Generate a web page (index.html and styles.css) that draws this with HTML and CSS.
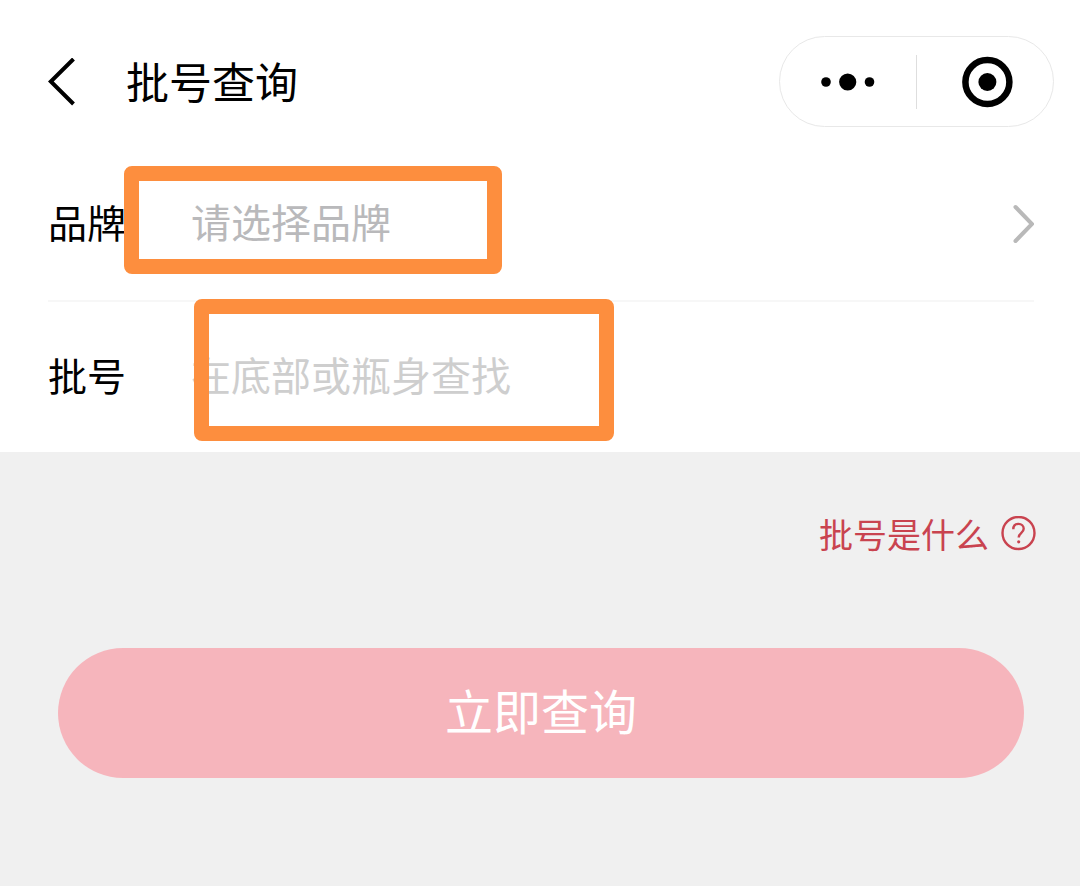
FILE: index.html
```html
<!DOCTYPE html>
<html lang="zh-CN">
<head>
  <meta charset="utf-8">
  <meta name="viewport" content="width=device-width, initial-scale=1">
  <title>批号查询</title>
  <link rel="stylesheet" href="styles.css">
</head>
<body>
  <header class="navbar">
    <button class="icon-button back" type="button" aria-label="返回">
      <svg width="28" height="48" viewBox="0 0 28 48" fill="none" stroke="#000" stroke-width="4"><path d="M25.500 1L2.800 23.500L25.500 46"/></svg>
    </button>
    <h1 class="title">批号查询</h1>
    <div class="capsule">
      <button class="icon-button capsule-part" type="button" aria-label="更多">
        <svg width="56" height="20" viewBox="0 0 56 20"><circle cx="6" cy="10" r="4.800"/><circle cx="27.700" cy="10" r="8.600"/><circle cx="49.500" cy="10" r="4.800"/></svg>
      </button>
      <button class="icon-button capsule-part" type="button" aria-label="关闭">
        <svg width="56" height="52" viewBox="-4 0 56 52"><circle cx="26.400" cy="26" r="22" fill="none" stroke="#000" stroke-width="6.500"/><circle cx="26.400" cy="26" r="9"/></svg>
      </button>
    </div>
  </header>
  <main>
    <form class="form">
      <div class="fields">
        <div class="row">
          <label class="label" for="brand">品牌</label>
          <button class="control picker" id="brand" type="button">
            <span class="picker-text">请选择品牌</span>
            <svg width="24" height="40" viewBox="0 0 24 40" fill="none" stroke="#b9b9b9" stroke-width="4" stroke-linecap="round"><path d="M5.500 3L22 20L5.500 37"/></svg>
          </button>
          <span class="highlight highlight-brand"></span>
        </div>
        <div class="row">
          <label class="label" for="batch">批号</label>
          <input class="control" id="batch" type="text" placeholder="在底部或瓶身查找">
          <span class="highlight highlight-batch"></span>
        </div>
      </div>
      <div class="actions">
        <a class="help" href="#help">批号是什么
          <svg width="36" height="36" viewBox="0 0 36 36" fill="none" stroke="currentColor" stroke-width="2.400"><circle cx="17.500" cy="17" r="16"/><path d="M12.300 13.300C12.300 9.800 14.500 7.900 17.500 7.900C20.500 7.900 22.700 10 22.700 12.800C22.700 17 17.700 16.800 17.700 21.600"/><circle cx="17.700" cy="25.800" r="1.600" fill="currentColor" stroke="none"/></svg>
        </a>
        <button class="submit" type="submit">立即查询</button>
      </div>
    </form>
  </main>
</body>
</html>
```
FILE: styles.css
```css
* {
  box-sizing: border-box;
}

body {
  margin: 0;
  min-height: 100vh;
  background: #f0f0f0;
  color: #000;
  font-family: "Noto Sans CJK SC", sans-serif;
}

button,
input {
  margin: 0;
  padding: 0;
  border: 0;
  background: none;
  font: inherit;
}

svg {
  display: block;
  flex: none;
}

.navbar {
  display: flex;
  align-items: center;
  padding: 36px 26px 21px 48px;
  background: #fff;
}

.icon-button {
  display: flex;
  align-items: center;
  justify-content: center;
}

.title {
  flex: 1;
  margin: 0 0 0 50px;
  padding-bottom: 4px;
  font-size: 43px;
  line-height: 60px;
  font-weight: 400;
}

.capsule {
  display: flex;
  align-items: center;
  width: 275px;
  height: 91px;
  border: 1px solid #e8e8e8;
  border-radius: 46px;
}

.capsule-part {
  flex: 1;
  height: 54px;
}

.capsule-part + .capsule-part {
  border-left: 1px solid #dedede;
}

.fields {
  padding: 0 46px 0 48px;
  background: #fff;
}

.row {
  position: relative;
  display: flex;
  align-items: center;
  height: 152px;
}

.row + .row {
  border-top: 2px solid #f7f7f7;
}

.label {
  width: 143px;
  padding-bottom: 6px;
  font-size: 39px;
  line-height: 56px;
}

.control {
  flex: 1;
  min-width: 0;
  color: #b9b9bb;
  font-size: 40px;
  line-height: 56px;
  text-align: left;
}

input.control,
.picker-text {
  height: 62px;
  padding-bottom: 6px;
}

.control::placeholder {
  color: #cecece;
  opacity: 1;
}

.picker {
  display: flex;
  align-items: center;
  justify-content: space-between;
}

/* Marker frames drawn over the two fields */
.highlight {
  position: absolute;
  border: 15px solid #fd8e3e;
  border-radius: 8px;
  pointer-events: none;
}

.highlight-brand {
  top: 18px;
  left: 76px;
  width: 378px;
  height: 108px;
}

.highlight-batch {
  top: -3px;
  left: 146px;
  width: 420px;
  height: 142px;
}

.actions {
  display: flex;
  flex-direction: column;
  padding: 57px 56px 56px 58px;
}

.help {
  display: flex;
  align-items: center;
  align-self: flex-end;
  gap: 12px;
  margin-right: -13px;
  color: #c9434f;
  font-size: 34px;
  line-height: 50px;
  text-decoration: none;
}

.submit {
  height: 130px;
  margin-top: 89px;
  padding-bottom: 8px;
  border-radius: 65px;
  background: #f6b5bc;
  color: #fff;
  font-size: 48px;
}
```
